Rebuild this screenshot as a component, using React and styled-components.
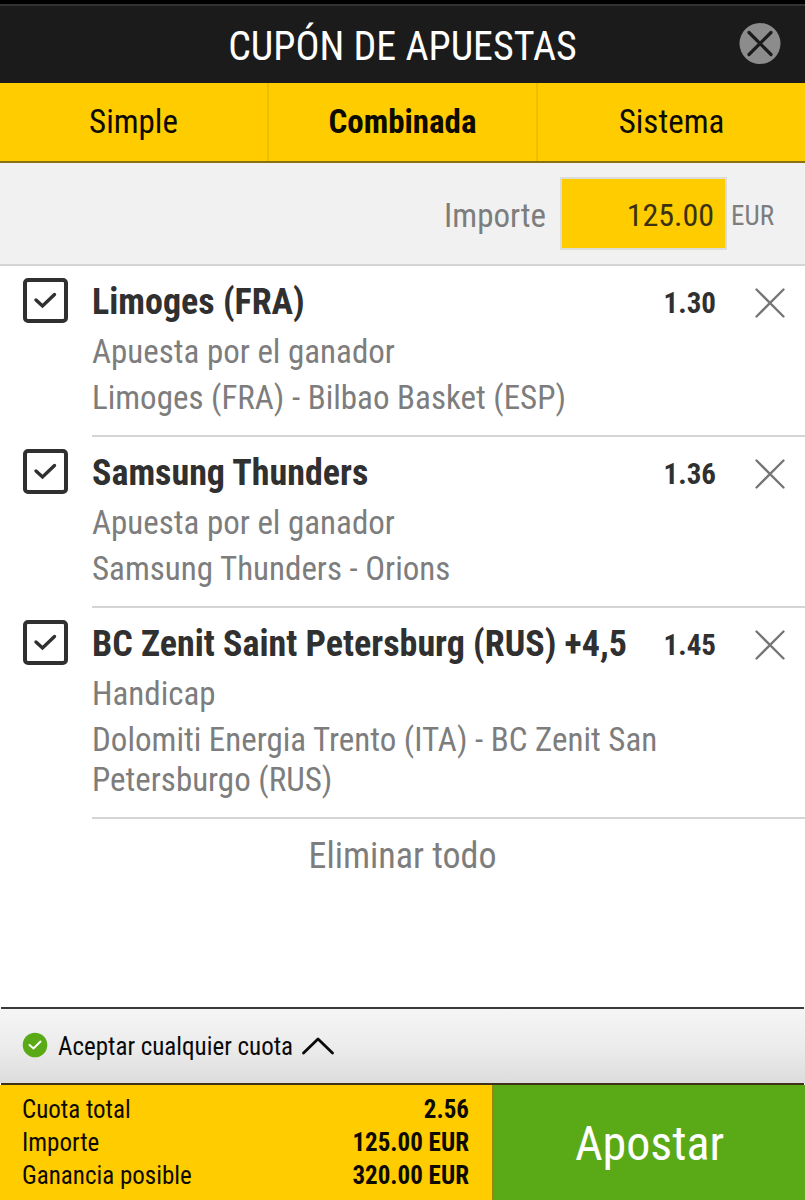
import React, { useState } from "react";
import styled, { createGlobalStyle } from "styled-components";

const GlobalStyle = createGlobalStyle`
  * {
    box-sizing: border-box;
  }
  body {
    margin: 0;
    background: #fff;
  }
  body, button, input {
    font-family: "Roboto Condensed", "Liberation Sans Narrow", Roboto, sans-serif;
  }
  button {
    margin: 0;
    padding: 0;
    border: none;
    background: none;
    color: inherit;
    cursor: pointer;
  }
`;

const Page = styled.div`
  display: flex;
  flex-direction: column;
  min-height: 100vh;
`;

const Header = styled.header`
  display: grid;
  grid-template-columns: 1fr auto 1fr;
  align-items: center;
  min-height: 83px;
  padding: 0 24px;
  border-top: 4px solid #000;
  box-shadow: inset 0 2px 0 #333;
  background: #1b1b1b;
`;

const Title = styled.h1`
  grid-column: 2;
  margin: 0;
  padding-top: 6px;
  font-weight: 400;
  font-size: 40px;
  line-height: 48px;
  color: #fff;
`;

const CloseButton = styled.button`
  justify-self: end;
  height: 42px;
`;

const Tabs = styled.div`
  display: flex;
  background: #ffcc00;
  border-bottom: 2px solid #8a7115;
`;

const Tab = styled.button`
  flex: 1;
  height: 78px;
  padding-bottom: 2px;
  font-size: 33px;
  font-weight: ${({ $active }) => ($active ? 700 : 400)};
  color: #0d0a00;

  & + & {
    border-left: 2px solid #edbd00;
  }
`;

const StakeRow = styled.div`
  display: flex;
  align-items: center;
  justify-content: flex-end;
  padding: 14px 31px 14px 24px;
  background: #f1f1f1;
  border-bottom: 2px solid #d5d5d5;
  color: #7d7d7d;
`;

const StakeLabel = styled.label`
  margin-right: 14px;
  padding-top: 4px;
  font-size: 33px;
`;

const StakeInput = styled.input`
  width: 167px;
  height: 73px;
  padding: 2px 11px 0;
  border: 2px solid #dcdcd8;
  border-radius: 0;
  background: #ffcc00;
  font-size: 32px;
  text-align: right;
  color: #3a3210;
`;

const Currency = styled.span`
  margin-left: 4px;
  padding-top: 4px;
  font-size: 27px;
`;

const BetList = styled.ul`
  flex: 1;
  margin: 0;
  padding: 0;
  list-style: none;
`;

const Bet = styled.li`
  display: flex;
  padding-left: 23px;
`;

const CheckCell = styled.span`
  display: grid;
  flex: none;
  margin-top: 12px;

  & > * {
    grid-area: 1 / 1;
  }

  svg {
    pointer-events: none;
    visibility: hidden;
  }

  input:checked + svg {
    visibility: visible;
  }
`;

const Checkbox = styled.input`
  appearance: none;
  width: 45px;
  height: 45px;
  margin: 0;
  border: 4px solid #303030;
  border-radius: 5px;
  background: #fff;
`;

const BetBody = styled.div`
  flex: 1;
  margin-left: 24px;
  padding: 12px 0 17px;
  border-bottom: 2px solid #d5d5d5;
`;

const BetTop = styled.div`
  display: flex;
  align-items: center;
  padding-right: 19px;
`;

const BetName = styled.label`
  flex: 1;
  font-size: 36px;
  font-weight: 700;
  line-height: 48px;
  color: #303030;
`;

const Odds = styled.span`
  margin-right: 38px;
  padding-top: 2px;
  font-size: 29px;
  font-weight: 700;
  color: #303030;
`;

const RemoveButton = styled.button`
  height: 34px;
  padding-top: 2px;
`;

const BetLine = styled.p`
  margin: 6px 120px 0 0;
  font-size: 33px;
  line-height: 40px;
  color: #7d7d7d;
`;

const RemoveAll = styled.button`
  display: block;
  margin: 0 auto;
  padding: 16px 0;
  font-size: 36px;
  color: #7d7d7d;
`;

const Rule = styled.div`
  height: 2px;
  margin: 0 1px;
  background: ${({ $color }) => $color};
`;

const AcceptBar = styled.div`
  padding-bottom: 3px;
  background: linear-gradient(#f5f5f5, #ececec 50%, #dcdcdc);
`;

const AcceptButton = styled.button`
  display: flex;
  align-items: center;
  height: 71px;
  padding-left: 22px;
  font-size: 25px;
  color: #0a0a0a;
`;

const AcceptText = styled.span`
  margin: 4px 8px 0 10px;
`;

const Footer = styled.footer`
  display: grid;
  grid-template-columns: 494fr 311fr;
  min-height: 115px;
`;

const Totals = styled.dl`
  margin: 0;
  padding: 8px 23px 8px 22px;
  border-right: 2px solid #99870d;
  background: #ffcc00;
`;

const Total = styled.div`
  display: flex;
  justify-content: space-between;
  font-size: 25px;
  line-height: 33px;
  color: #0d0a00;

  dd {
    margin: 0;
    font-weight: 700;
  }
`;

const PlaceBet = styled.button`
  padding-top: 2px;
  background: #5aa917;
  font-size: 48px;
  color: #fff;
`;

const CloseIcon = () => (
  <svg width="42" height="42" viewBox="0 0 42 42" aria-hidden="true">
    <circle cx="21" cy="20.5" r="20.5" fill="#8c8c8c" />
    <path d="M10 9.5 32 31.5 M32 9.5 10 31.5" stroke="#1b1b1b" strokeWidth="3.2" strokeLinecap="round" />
  </svg>
);

const RemoveIcon = () => (
  <svg width="32" height="32" viewBox="0 0 32 32" aria-hidden="true">
    <path d="M2.5 2.5 29.5 29.5 M29.5 2.5 2.5 29.5" stroke="#757575" strokeWidth="2.3" strokeLinecap="round" />
  </svg>
);

const CheckIcon = () => (
  <svg width="45" height="45" viewBox="0 0 45 45" fill="none" aria-hidden="true">
    <path d="M13 22 19.5 28 31.5 16.5" stroke="#303030" strokeWidth="3.4" strokeLinecap="round" />
  </svg>
);

const AcceptedIcon = () => (
  <svg width="26" height="26" viewBox="0 0 26 26" fill="none" aria-hidden="true">
    <circle cx="13" cy="13" r="12.3" fill="#5aa917" />
    <path d="M7.5 13 11.5 16.5 18.5 9.5" stroke="#fff" strokeWidth="2" strokeLinecap="round" />
  </svg>
);

const ChevronUp = () => (
  <svg width="34" height="20" viewBox="0 0 34 20" fill="none" aria-hidden="true">
    <path d="M2.5 18 17 4 31.5 18" stroke="#0a0a0a" strokeWidth="2.8" strokeLinecap="round" strokeLinejoin="round" />
  </svg>
);

const TABS = ["Simple", "Combinada", "Sistema"];

const BETS = [
  {
    id: "limoges",
    name: "Limoges (FRA)",
    market: "Apuesta por el ganador",
    match: "Limoges (FRA) - Bilbao Basket (ESP)",
    odds: "1.30",
  },
  {
    id: "samsung",
    name: "Samsung Thunders",
    market: "Apuesta por el ganador",
    match: "Samsung Thunders - Orions",
    odds: "1.36",
  },
  {
    id: "zenit",
    name: "BC Zenit Saint Petersburg (RUS) +4,5",
    market: "Handicap",
    match: "Dolomiti Energia Trento (ITA) - BC Zenit San Petersburgo (RUS)",
    odds: "1.45",
  },
];

const TOTALS = [
  ["Cuota total", "2.56"],
  ["Importe", "125.00 EUR"],
  ["Ganancia posible", "320.00 EUR"],
];

const BetItem = ({ bet, onRemove }) => (
  <Bet>
    <CheckCell>
      <Checkbox type="checkbox" id={bet.id} defaultChecked />
      <CheckIcon />
    </CheckCell>
    <BetBody>
      <BetTop>
        <BetName htmlFor={bet.id}>{bet.name}</BetName>
        <Odds>{bet.odds}</Odds>
        <RemoveButton type="button" aria-label={`Eliminar ${bet.name}`} onClick={onRemove}>
          <RemoveIcon />
        </RemoveButton>
      </BetTop>
      <BetLine>{bet.market}</BetLine>
      <BetLine>{bet.match}</BetLine>
    </BetBody>
  </Bet>
);

const App = () => {
  const [tab, setTab] = useState("Combinada");
  const [bets, setBets] = useState(BETS);

  return (
    <Page>
      <GlobalStyle />
      <Header>
        <Title>CUPÓN DE APUESTAS</Title>
        <CloseButton type="button" aria-label="Cerrar">
          <CloseIcon />
        </CloseButton>
      </Header>
      <Tabs role="tablist">
        {TABS.map((name) => (
          <Tab
            key={name}
            type="button"
            role="tab"
            aria-selected={tab === name}
            $active={tab === name}
            onClick={() => setTab(name)}
          >
            {name}
          </Tab>
        ))}
      </Tabs>
      <StakeRow>
        <StakeLabel htmlFor="stake">Importe</StakeLabel>
        <StakeInput id="stake" type="text" inputMode="decimal" defaultValue="125.00" />
        <Currency>EUR</Currency>
      </StakeRow>
      <BetList>
        {bets.map((bet) => (
          <BetItem key={bet.id} bet={bet} onRemove={() => setBets(bets.filter((b) => b.id !== bet.id))} />
        ))}
        <li>
          <RemoveAll type="button" onClick={() => setBets([])}>
            Eliminar todo
          </RemoveAll>
        </li>
      </BetList>
      <Rule $color="#3a3a3a" />
      <AcceptBar>
        <AcceptButton type="button">
          <AcceptedIcon />
          <AcceptText>Aceptar cualquier cuota</AcceptText>
          <ChevronUp />
        </AcceptButton>
      </AcceptBar>
      <Rule $color="#3f3216" />
      <Footer>
        <Totals>
          {TOTALS.map(([label, value]) => (
            <Total key={label}>
              <dt>{label}</dt>
              <dd>{value}</dd>
            </Total>
          ))}
        </Totals>
        <PlaceBet type="button">Apostar</PlaceBet>
      </Footer>
    </Page>
  );
};

export default App;
